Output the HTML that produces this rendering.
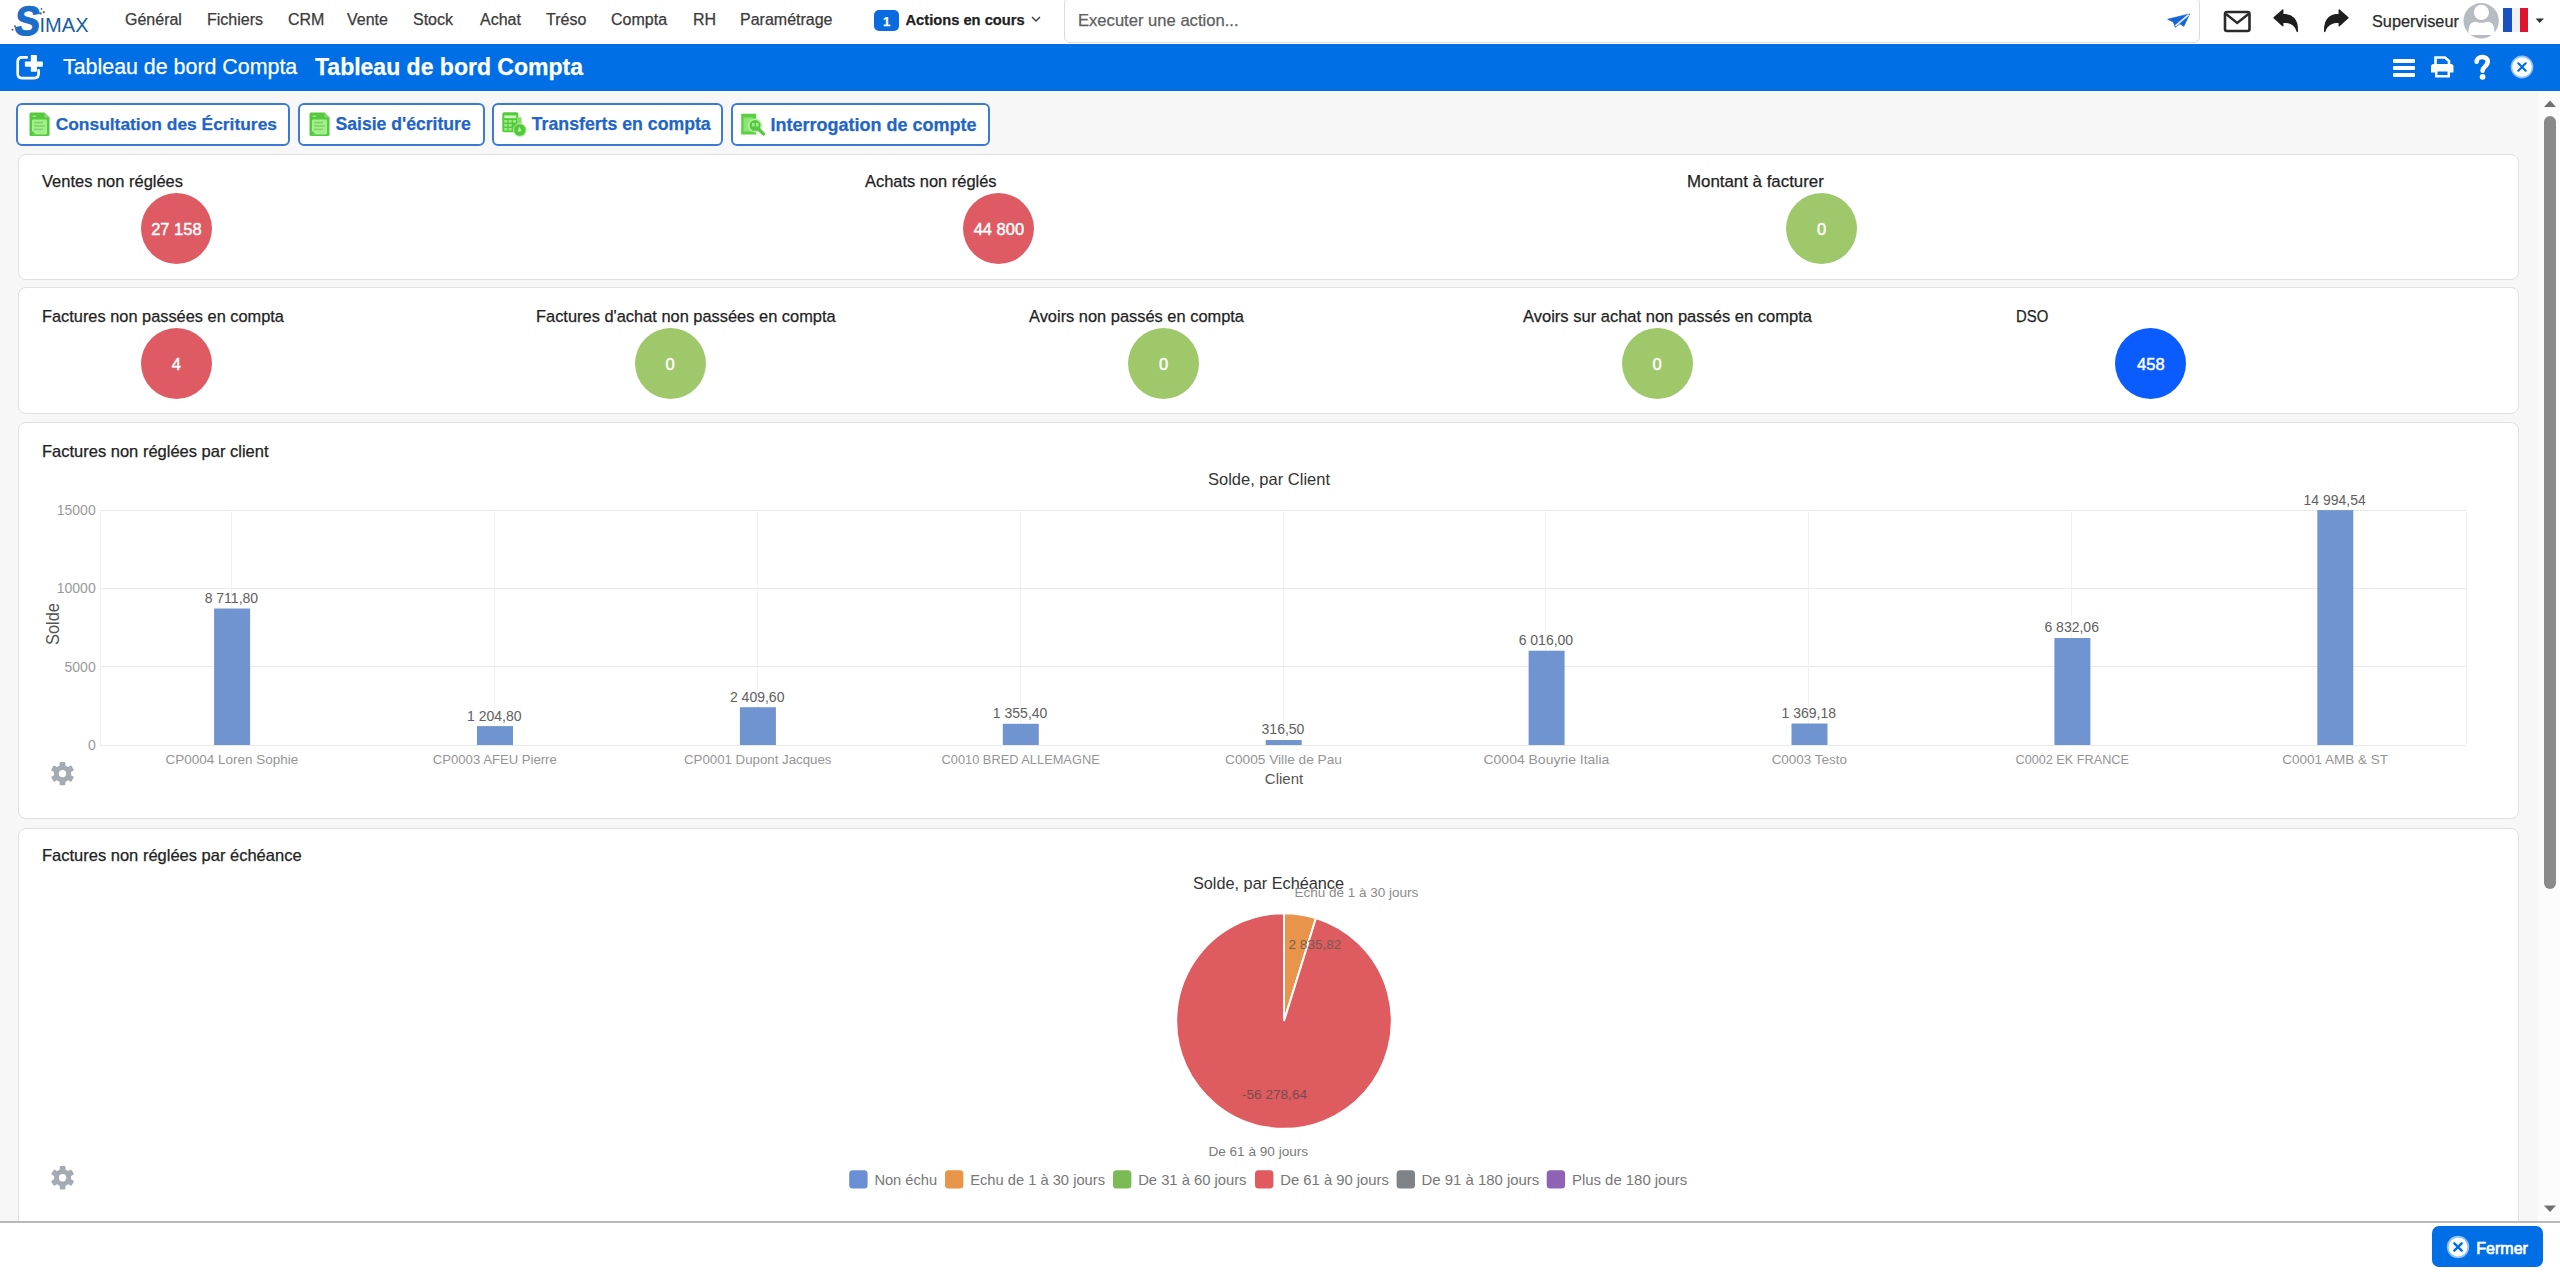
<!DOCTYPE html>
<html><head><meta charset="utf-8"><title>Tableau de bord Compta</title>
<style>
html,body{margin:0;padding:0;width:2560px;height:1280px;overflow:hidden;background:#fff;font-family:"Liberation Sans",sans-serif;}
.t{position:absolute;white-space:nowrap;line-height:1;font-family:"Liberation Sans",sans-serif;-webkit-text-stroke:0.25px currentColor;}
</style></head><body>
<div style="position:absolute;left:0px;top:0px;width:2560px;height:44px;background:#fff"></div>
<div class="t" style="left:125.0px;top:11.95px;font-size:16px;color:#3b3b3b;font-weight:400;">Général</div>
<div class="t" style="left:207.0px;top:11.95px;font-size:16px;color:#3b3b3b;font-weight:400;">Fichiers</div>
<div class="t" style="left:288.0px;top:11.95px;font-size:16px;color:#3b3b3b;font-weight:400;">CRM</div>
<div class="t" style="left:347.0px;top:11.95px;font-size:16px;color:#3b3b3b;font-weight:400;">Vente</div>
<div class="t" style="left:413.0px;top:11.95px;font-size:16px;color:#3b3b3b;font-weight:400;">Stock</div>
<div class="t" style="left:480.0px;top:11.95px;font-size:16px;color:#3b3b3b;font-weight:400;">Achat</div>
<div class="t" style="left:546.0px;top:11.95px;font-size:16px;color:#3b3b3b;font-weight:400;">Tréso</div>
<div class="t" style="left:611.0px;top:11.95px;font-size:16px;color:#3b3b3b;font-weight:400;">Compta</div>
<div class="t" style="left:693.0px;top:11.95px;font-size:16px;color:#3b3b3b;font-weight:400;">RH</div>
<div class="t" style="left:740.0px;top:11.95px;font-size:16px;color:#3b3b3b;font-weight:400;">Paramétrage</div>
<div style="position:absolute;left:874px;top:10px;width:25px;height:21px;background:#0a6ae0;border-radius:5px"></div>
<div class="t" style="left:286.5px;width:1200px;text-align:center;top:14.99px;font-size:13px;color:#fff;font-weight:700;">1</div>
<div class="t" style="left:905.5px;top:13.05px;font-size:14.7px;color:#222;font-weight:700;">Actions en cours</div>
<svg style="position:absolute;left:1030px;top:15px" width="12" height="9"><path d="M2 2 L6 6 L10 2" stroke="#444" stroke-width="1.5" fill="none"/></svg>
<div style="position:absolute;left:1064px;top:-3px;width:1136px;height:46px;box-sizing:border-box;border:1px solid #dcdcdc;border-radius:6px;background:#fff"></div>
<div class="t" style="left:1078.0px;top:13.44px;font-size:16.6px;color:#5e5e5e;font-weight:400;">Executer une action...</div>
<svg style="position:absolute;left:2160px;top:6px" width="36" height="28" viewBox="0 0 36 28"><path d="M7.7 13.3 L29.6 7.9 L23.8 20.3 L19.8 17.8 L15.3 21.2 L13.3 15.9 Z" fill="#1565d8" stroke="#1565d8" stroke-width="0.8" stroke-linejoin="round"/><path d="M15.4 19.8 L28.8 8.6" stroke="#e8f4ff" stroke-width="1.7"/></svg>
<svg style="position:absolute;left:2223px;top:10px" width="29" height="23" viewBox="0 0 29 23"><rect x="2" y="2" width="24.5" height="19" rx="2" fill="none" stroke="#2a2a2a" stroke-width="2.6"/><path d="M3 4 L14.2 13 L25.5 4" fill="none" stroke="#2a2a2a" stroke-width="2.4"/></svg>
<svg style="position:absolute;left:2272px;top:8px" width="30" height="26" viewBox="0 0 30 26"><path d="M2 9.8 L10.8 2 L10.8 6.5 C19.5 6.5 26 10.5 25.3 23.5 C23.5 17 19 14 10.8 14 L10.8 17.8 Z" fill="#1e1e1e" stroke="#1e1e1e" stroke-width="1.3" stroke-linejoin="round"/></svg>
<svg style="position:absolute;left:2320px;top:8px" width="30" height="26" viewBox="0 0 30 26"><path d="M28 9.8 L19.2 2 L19.2 6.5 C10.5 6.5 4 10.5 4.7 23.5 C6.5 17 11 14 19.2 14 L19.2 17.8 Z" fill="#1e1e1e" stroke="#1e1e1e" stroke-width="1.3" stroke-linejoin="round"/></svg>
<div class="t" style="left:2372.0px;top:12.50px;font-size:16.3px;color:#2b2b2b;font-weight:400;">Superviseur</div>
<svg style="position:absolute;left:2463px;top:2px" width="37" height="38" viewBox="0 0 37 38"><circle cx="18.2" cy="18.8" r="17.7" fill="#b7bcc2"/><circle cx="18.4" cy="10.3" r="7.6" fill="#fff"/><path d="M5.5 30 C5.5 22 9 19.8 13 19.8 C15 21.2 21.5 21.2 23.8 19.8 C28 19.8 31.5 22 31.5 30 C31.5 33 29 33 26 33 L11 33 C8 33 5.5 33 5.5 30 Z" fill="#fff"/></svg>
<div style="position:absolute;left:2503px;top:8px;width:8.5px;height:24px;background:#1b4fc4"></div>
<div style="position:absolute;left:2511.5px;top:8px;width:8.5px;height:24px;background:#eef0f4"></div>
<div style="position:absolute;left:2520px;top:8px;width:8px;height:24px;background:#e0142c"></div>
<svg style="position:absolute;left:2535px;top:18px" width="10" height="6"><path d="M0.5 0.5 L9 0.5 L4.75 5 Z" fill="#333"/></svg>
<div style="position:absolute;left:0px;top:44px;width:2560px;height:47px;background:#006ee5"></div>
<svg style="position:absolute;left:10px;top:50px" width="40" height="35" viewBox="0 0 40 35"><path d="M16.7 7.4 L12 7.4 Q7.7 7.4 7.7 11.7 L7.7 23.8 Q7.7 28.1 12 28.1 L24.3 28.1 Q28.6 28.1 28.6 23.8 L28.6 20.4" fill="none" stroke="#fff" stroke-width="2.7" stroke-linecap="round"/><rect x="14.9" y="11.4" width="17.9" height="5.3" rx="0.8" fill="#fff"/><rect x="20.8" y="5" width="6.1" height="16.7" rx="0.8" fill="#fff"/></svg>
<div class="t" style="left:63.0px;top:56.88px;font-size:21.4px;color:#fff;font-weight:400;">Tableau de bord Compta</div>
<div class="t" style="left:315.0px;top:55.53px;font-size:23px;color:#fff;font-weight:700;">Tableau de bord Compta</div>
<div style="position:absolute;left:2393px;top:58.5px;width:22px;height:4px;background:#fff;border-radius:1px"></div>
<div style="position:absolute;left:2393px;top:65.5px;width:22px;height:4px;background:#fff;border-radius:1px"></div>
<div style="position:absolute;left:2393px;top:72.5px;width:22px;height:4px;background:#fff;border-radius:1px"></div>
<svg style="position:absolute;left:2430px;top:56px" width="25" height="23" viewBox="0 0 25 23"><path d="M5.5 8 L5.5 1.5 L15 1.5 L19 5 L19 8" fill="none" stroke="#fff" stroke-width="2.6"/><path d="M1 10.5 Q1 8 3.5 8 L21 8 Q23.5 8 23.5 10.5 L23.5 16.5 L20 16.5 L20 21.5 L5 21.5 L5 16.5 L1 16.5 Z" fill="#fff"/><rect x="7.5" y="15.5" width="10" height="3.5" fill="#006ee5"/></svg>
<svg style="position:absolute;left:2473px;top:54px" width="18" height="27" viewBox="0 0 18 27"><path d="M3.6 7.8 C3.6 1.6 14.8 1.2 14.8 7.8 C14.8 12.2 9.6 12.6 9.6 16.8" fill="none" stroke="#fff" stroke-width="4.6" stroke-linecap="round"/><circle cx="9.6" cy="22.8" r="2.9" fill="#fff"/></svg>
<svg style="position:absolute;left:2510px;top:55px" width="24" height="24" viewBox="0 0 24 24"><circle cx="12" cy="12" r="10.6" fill="#fff" stroke="#8fc0ff" stroke-width="1.6"/><path d="M8.3 8.3 L15.7 15.7 M15.7 8.3 L8.3 15.7" stroke="#006ee5" stroke-width="2.2" stroke-linecap="round"/></svg>
<div style="position:absolute;left:0px;top:91px;width:2560px;height:1130px;background:#f7f7f7"></div>
<div style="position:absolute;left:16px;top:103px;width:274px;height:43px;box-sizing:border-box;border:2px solid #3d7ad6;border-radius:6px;background:#fff"></div>
<div class="t" style="left:55.7px;top:116.27px;font-size:17.4px;color:#1f65c6;font-weight:700;">Consultation des Écritures</div>
<div style="position:absolute;left:298px;top:103px;width:187px;height:43px;box-sizing:border-box;border:2px solid #3d7ad6;border-radius:6px;background:#fff"></div>
<div class="t" style="left:335.5px;top:116.10px;font-size:17.6px;color:#1f65c6;font-weight:700;">Saisie d'écriture</div>
<div style="position:absolute;left:492px;top:103px;width:231px;height:43px;box-sizing:border-box;border:2px solid #3d7ad6;border-radius:6px;background:#fff"></div>
<div class="t" style="left:531.8px;top:116.01px;font-size:17.7px;color:#1f65c6;font-weight:700;">Transferts en compta</div>
<div style="position:absolute;left:731px;top:103px;width:259px;height:43px;box-sizing:border-box;border:2px solid #3d7ad6;border-radius:6px;background:#fff"></div>
<div class="t" style="left:770.5px;top:115.76px;font-size:18px;color:#1f65c6;font-weight:700;">Interrogation de compte</div>
<svg style="position:absolute;left:28.5px;top:112px" width="21" height="25" viewBox="0 0 21 25"><path d="M2 0.5 L15.5 0.5 L20.5 5.5 L20.5 22.5 Q20.5 24 19 24 L2 24 Q0.5 24 0.5 22.5 L0.5 2 Q0.5 0.5 2 0.5 Z" fill="#55c93e"/><path d="M15.5 0.5 L20.5 5.5 L15.5 5.5 Z" fill="#8fcf80"/><rect x="3" y="7.5" width="15" height="15" rx="1" fill="#a4ef8c"/><g fill="#7ed467"><rect x="5" y="9.8" width="9" height="1.6"/><rect x="5" y="13.2" width="11" height="1.6"/><rect x="5" y="16.6" width="9" height="1.6"/></g><rect x="3.5" y="3.5" width="3.5" height="1.4" fill="#98f07e"/><path d="M3 19 L7 22.5 L3 22.5 Z" fill="#55c93e"/></svg>
<svg style="position:absolute;left:309px;top:112px" width="21" height="25" viewBox="0 0 21 25"><path d="M2 0.5 L15.5 0.5 L20.5 5.5 L20.5 22.5 Q20.5 24 19 24 L2 24 Q0.5 24 0.5 22.5 L0.5 2 Q0.5 0.5 2 0.5 Z" fill="#55c93e"/><path d="M15.5 0.5 L20.5 5.5 L15.5 5.5 Z" fill="#8fcf80"/><rect x="3" y="7.5" width="15" height="15" rx="1" fill="#a4ef8c"/><g fill="#7ed467"><rect x="5" y="9.8" width="9" height="1.6"/><rect x="5" y="13.2" width="11" height="1.6"/><rect x="5" y="16.6" width="9" height="1.6"/></g><rect x="3.5" y="3.5" width="3.5" height="1.4" fill="#98f07e"/><path d="M3 19 L7 22.5 L3 22.5 Z" fill="#55c93e"/></svg>
<svg style="position:absolute;left:498px;top:108px" width="32" height="32" viewBox="0 0 32 32"><rect x="4.3" y="4.3" width="16" height="20" rx="1.8" fill="#55c93e"/><rect x="6.3" y="7.4" width="12" height="2.8" fill="#c8f7b6"/><g fill="#98ee80"><rect x="6.3" y="12" width="3" height="2.6"/><rect x="10.6" y="12" width="3" height="2.6"/><rect x="14.9" y="12" width="3" height="2.6"/><rect x="6.3" y="16" width="3" height="2.6"/><rect x="10.6" y="16" width="3" height="2.6"/><rect x="6.3" y="20" width="3" height="2.6"/><rect x="10.6" y="20" width="3" height="2.6"/></g><rect x="19" y="9.3" width="4.6" height="6.5" fill="#86dc70"/><circle cx="21.8" cy="22" r="6.3" fill="#52c83a" stroke="#b8f3a4" stroke-width="0.9"/><path d="M21.5 18.5 L19.5 23.5 L23.5 23.5 Z" fill="#b2f79a"/></svg>
<svg style="position:absolute;left:737px;top:108px" width="32" height="32" viewBox="0 0 32 32"><rect x="4.2" y="5.7" width="15" height="20.8" fill="#5ccf44"/><rect x="6.5" y="9.5" width="9" height="14" fill="#8ce676"/><circle cx="18" cy="17.5" r="6.3" fill="#58c846" stroke="#b6f5a0" stroke-width="1.6"/><rect x="15.2" y="15" width="2.4" height="3.5" fill="#a2f48a"/><rect x="19" y="15" width="2.4" height="3.5" fill="#a2f48a"/><path d="M22 21.5 L26.6 26" stroke="#5ec444" stroke-width="3.2" stroke-linecap="round"/></svg>
<div style="position:absolute;left:18px;top:154px;width:2501px;height:126px;box-sizing:border-box;border:1px solid #e0e0e2;border-radius:8px;background:#fff"></div>
<div style="position:absolute;left:18px;top:287px;width:2501px;height:127px;box-sizing:border-box;border:1px solid #e0e0e2;border-radius:8px;background:#fff"></div>
<div style="position:absolute;left:18px;top:422px;width:2501px;height:397px;box-sizing:border-box;border:1px solid #e0e0e2;border-radius:8px;background:#fff"></div>
<div style="position:absolute;left:18px;top:828px;width:2501px;height:400px;box-sizing:border-box;border:1px solid #e0e0e2;border-radius:8px 8px 0 0;background:#fff"></div>
<div class="t" style="left:42.0px;top:172.80px;font-size:16.3px;color:#1f1f1f;font-weight:400;transform:scaleX(1.0115);transform-origin:0 0;">Ventes non réglées</div>
<div style="position:absolute;left:140.9px;top:192.8px;width:71px;height:71px;background:#de5b63;border-radius:50%"></div>
<div class="t" style="left:-423.6px;width:1200px;text-align:center;top:221.33px;font-size:16.5px;color:#fff;font-weight:400;-webkit-text-stroke:0.45px #fff;">27 158</div>
<div class="t" style="left:864.5px;top:172.80px;font-size:16.3px;color:#1f1f1f;font-weight:400;transform:scaleX(1.0092);transform-origin:0 0;">Achats non réglés</div>
<div style="position:absolute;left:963.4px;top:192.8px;width:71px;height:71px;background:#de5b63;border-radius:50%"></div>
<div class="t" style="left:398.9px;width:1200px;text-align:center;top:221.33px;font-size:16.5px;color:#fff;font-weight:400;-webkit-text-stroke:0.45px #fff;">44 800</div>
<div class="t" style="left:1687.0px;top:172.80px;font-size:16.3px;color:#1f1f1f;font-weight:400;transform:scaleX(1.0356);transform-origin:0 0;">Montant à facturer</div>
<div style="position:absolute;left:1786.0px;top:192.8px;width:71px;height:71px;background:#9fc86b;border-radius:50%"></div>
<div class="t" style="left:1221.5px;width:1200px;text-align:center;top:221.33px;font-size:16.5px;color:#fff;font-weight:400;-webkit-text-stroke:0.45px #fff;">0</div>
<div class="t" style="left:42.0px;top:307.80px;font-size:16.3px;color:#1f1f1f;font-weight:400;transform:scaleX(1.0050);transform-origin:0 0;">Factures non passées en compta</div>
<div style="position:absolute;left:140.9px;top:327.5px;width:71px;height:71px;background:#de5b63;border-radius:50%"></div>
<div class="t" style="left:-423.6px;width:1200px;text-align:center;top:356.03px;font-size:16.5px;color:#fff;font-weight:400;-webkit-text-stroke:0.45px #fff;">4</div>
<div class="t" style="left:535.6px;top:307.80px;font-size:16.3px;color:#1f1f1f;font-weight:400;transform:scaleX(1.0081);transform-origin:0 0;">Factures d'achat non passées en compta</div>
<div style="position:absolute;left:634.5px;top:327.5px;width:71px;height:71px;background:#9fc86b;border-radius:50%"></div>
<div class="t" style="left:70.0px;width:1200px;text-align:center;top:356.03px;font-size:16.5px;color:#fff;font-weight:400;-webkit-text-stroke:0.45px #fff;">0</div>
<div class="t" style="left:1029.2px;top:307.80px;font-size:16.3px;color:#1f1f1f;font-weight:400;transform:scaleX(1.0080);transform-origin:0 0;">Avoirs non passés en compta</div>
<div style="position:absolute;left:1128.1000000000001px;top:327.5px;width:71px;height:71px;background:#9fc86b;border-radius:50%"></div>
<div class="t" style="left:563.6px;width:1200px;text-align:center;top:356.03px;font-size:16.5px;color:#fff;font-weight:400;-webkit-text-stroke:0.45px #fff;">0</div>
<div class="t" style="left:1522.8px;top:307.80px;font-size:16.3px;color:#1f1f1f;font-weight:400;transform:scaleX(1.0147);transform-origin:0 0;">Avoirs sur achat non passés en compta</div>
<div style="position:absolute;left:1621.7000000000003px;top:327.5px;width:71px;height:71px;background:#9fc86b;border-radius:50%"></div>
<div class="t" style="left:1057.2px;width:1200px;text-align:center;top:356.03px;font-size:16.5px;color:#fff;font-weight:400;-webkit-text-stroke:0.45px #fff;">0</div>
<div class="t" style="left:2016.4px;top:307.80px;font-size:16.3px;color:#1f1f1f;font-weight:400;transform:scaleX(0.9150);transform-origin:0 0;">DSO</div>
<div style="position:absolute;left:2115.3px;top:327.5px;width:71px;height:71px;background:#0b5cff;border-radius:50%"></div>
<div class="t" style="left:1550.8px;width:1200px;text-align:center;top:356.03px;font-size:16.5px;color:#fff;font-weight:400;-webkit-text-stroke:0.45px #fff;">458</div>
<div class="t" style="left:42.0px;top:443.03px;font-size:16.5px;color:#222;font-weight:400;">Factures non réglées par client</div>
<div class="t" style="left:42.0px;top:846.63px;font-size:16.5px;color:#222;font-weight:400;">Factures non réglées par échéance</div>
<svg style="position:absolute;left:0;top:0" width="2560" height="1280">
<g stroke="#e9e9e9" stroke-width="1" shape-rendering="crispEdges">
<line x1="100" y1="745.0" x2="2466" y2="745.0"/>
<line x1="100" y1="666.7" x2="2466" y2="666.7"/>
<line x1="100" y1="588.3" x2="2466" y2="588.3"/>
<line x1="100" y1="510.0" x2="2466" y2="510.0"/>
</g><g stroke="#f1f1f1" stroke-width="1" shape-rendering="crispEdges">
<line x1="231.4" y1="510" x2="231.4" y2="745"/>
<line x1="494.3" y1="510" x2="494.3" y2="745"/>
<line x1="757.2" y1="510" x2="757.2" y2="745"/>
<line x1="1020.1" y1="510" x2="1020.1" y2="745"/>
<line x1="1283.0" y1="510" x2="1283.0" y2="745"/>
<line x1="1545.9" y1="510" x2="1545.9" y2="745"/>
<line x1="1808.8" y1="510" x2="1808.8" y2="745"/>
<line x1="2071.7" y1="510" x2="2071.7" y2="745"/>
<line x1="2334.6" y1="510" x2="2334.6" y2="745"/>
<line x1="100" y1="510" x2="100" y2="745"/><line x1="2466" y1="510" x2="2466" y2="745"/>
</g>
<rect x="214.1" y="608.5" width="36" height="136.5" fill="#7094cf"/>
<text x="231.4" y="602.9" text-anchor="middle" font-family="Liberation Sans, sans-serif" font-size="14" fill="#606060">8 711,80</text>
<text x="231.9" y="763.7" text-anchor="middle" font-family="Liberation Sans, sans-serif" font-size="13.4" fill="#959595" textLength="133.0" lengthAdjust="spacingAndGlyphs">CP0004 Loren Sophie</text>
<rect x="477.0" y="726.1" width="36" height="18.9" fill="#7094cf"/>
<text x="494.3" y="720.5" text-anchor="middle" font-family="Liberation Sans, sans-serif" font-size="14" fill="#606060">1 204,80</text>
<text x="494.8" y="763.7" text-anchor="middle" font-family="Liberation Sans, sans-serif" font-size="13.4" fill="#959595" textLength="124.0" lengthAdjust="spacingAndGlyphs">CP0003 AFEU Pierre</text>
<rect x="739.9" y="707.2" width="36" height="37.8" fill="#7094cf"/>
<text x="757.2" y="701.6" text-anchor="middle" font-family="Liberation Sans, sans-serif" font-size="14" fill="#606060">2 409,60</text>
<text x="757.7" y="763.7" text-anchor="middle" font-family="Liberation Sans, sans-serif" font-size="13.4" fill="#959595" textLength="147.4" lengthAdjust="spacingAndGlyphs">CP0001 Dupont Jacques</text>
<rect x="1002.8" y="723.8" width="36" height="21.2" fill="#7094cf"/>
<text x="1020.1" y="718.2" text-anchor="middle" font-family="Liberation Sans, sans-serif" font-size="14" fill="#606060">1 355,40</text>
<text x="1020.6" y="763.7" text-anchor="middle" font-family="Liberation Sans, sans-serif" font-size="13.4" fill="#959595" textLength="158.2" lengthAdjust="spacingAndGlyphs">C0010 BRED ALLEMAGNE</text>
<rect x="1265.7" y="740.0" width="36" height="5.0" fill="#7094cf"/>
<text x="1283.0" y="734.4" text-anchor="middle" font-family="Liberation Sans, sans-serif" font-size="14" fill="#606060">316,50</text>
<text x="1283.5" y="763.7" text-anchor="middle" font-family="Liberation Sans, sans-serif" font-size="13.4" fill="#959595" textLength="116.9" lengthAdjust="spacingAndGlyphs">C0005 Ville de Pau</text>
<rect x="1528.6" y="650.7" width="36" height="94.3" fill="#7094cf"/>
<text x="1545.9" y="645.1" text-anchor="middle" font-family="Liberation Sans, sans-serif" font-size="14" fill="#606060">6 016,00</text>
<text x="1546.4" y="763.7" text-anchor="middle" font-family="Liberation Sans, sans-serif" font-size="13.4" fill="#959595" textLength="125.8" lengthAdjust="spacingAndGlyphs">C0004 Bouyrie Italia</text>
<rect x="1791.5" y="723.5" width="36" height="21.5" fill="#7094cf"/>
<text x="1808.8" y="717.9" text-anchor="middle" font-family="Liberation Sans, sans-serif" font-size="14" fill="#606060">1 369,18</text>
<text x="1809.3" y="763.7" text-anchor="middle" font-family="Liberation Sans, sans-serif" font-size="13.4" fill="#959595" textLength="75.3" lengthAdjust="spacingAndGlyphs">C0003 Testo</text>
<rect x="2054.4" y="638.0" width="36" height="107.0" fill="#7094cf"/>
<text x="2071.7" y="632.4" text-anchor="middle" font-family="Liberation Sans, sans-serif" font-size="14" fill="#606060">6 832,06</text>
<text x="2072.2" y="763.7" text-anchor="middle" font-family="Liberation Sans, sans-serif" font-size="13.4" fill="#959595" textLength="113.4" lengthAdjust="spacingAndGlyphs">C0002 EK FRANCE</text>
<rect x="2317.3" y="510.1" width="36" height="234.9" fill="#7094cf"/>
<text x="2334.6" y="504.5" text-anchor="middle" font-family="Liberation Sans, sans-serif" font-size="14" fill="#606060">14 994,54</text>
<text x="2335.1" y="763.7" text-anchor="middle" font-family="Liberation Sans, sans-serif" font-size="13.4" fill="#959595" textLength="105.9" lengthAdjust="spacingAndGlyphs">C0001 AMB &amp; ST</text>
<text x="95.7" y="750.0" text-anchor="end" font-family="Liberation Sans, sans-serif" font-size="14" fill="#9a9a9a">0</text>
<text x="95.7" y="671.7" text-anchor="end" font-family="Liberation Sans, sans-serif" font-size="14" fill="#9a9a9a">5000</text>
<text x="95.7" y="593.3" text-anchor="end" font-family="Liberation Sans, sans-serif" font-size="14" fill="#9a9a9a">10000</text>
<text x="95.7" y="515.0" text-anchor="end" font-family="Liberation Sans, sans-serif" font-size="14" fill="#9a9a9a">15000</text>
<text transform="translate(59,624) rotate(-90)" text-anchor="middle" font-family="Liberation Sans, sans-serif" font-size="17.5" fill="#555" textLength="42" lengthAdjust="spacingAndGlyphs">Solde</text>
<text x="1284" y="783.6" text-anchor="middle" font-family="Liberation Sans, sans-serif" font-size="15" fill="#555">Client</text>
<text x="1269" y="484.8" text-anchor="middle" font-family="Liberation Sans, sans-serif" font-size="16.5" fill="#333">Solde, par Client</text>
<g transform="translate(62.5,773.6)" fill="#a5abb3"><circle r="8.6"/><rect x="-2.9" y="-11.7" width="5.8" height="6" rx="1" transform="rotate(0)"/><rect x="-2.9" y="-11.7" width="5.8" height="6" rx="1" transform="rotate(60)"/><rect x="-2.9" y="-11.7" width="5.8" height="6" rx="1" transform="rotate(120)"/><rect x="-2.9" y="-11.7" width="5.8" height="6" rx="1" transform="rotate(180)"/><rect x="-2.9" y="-11.7" width="5.8" height="6" rx="1" transform="rotate(240)"/><rect x="-2.9" y="-11.7" width="5.8" height="6" rx="1" transform="rotate(300)"/><circle r="3.7" fill="#fff"/></g>
<g transform="translate(62.6,1177.7)" fill="#a5abb3"><circle r="8.6"/><rect x="-2.9" y="-11.7" width="5.8" height="6" rx="1" transform="rotate(0)"/><rect x="-2.9" y="-11.7" width="5.8" height="6" rx="1" transform="rotate(60)"/><rect x="-2.9" y="-11.7" width="5.8" height="6" rx="1" transform="rotate(120)"/><rect x="-2.9" y="-11.7" width="5.8" height="6" rx="1" transform="rotate(180)"/><rect x="-2.9" y="-11.7" width="5.8" height="6" rx="1" transform="rotate(240)"/><rect x="-2.9" y="-11.7" width="5.8" height="6" rx="1" transform="rotate(300)"/><circle r="3.7" fill="#fff"/></g>
<path d="M1284 1021 L1284 913.2 A107.8 107.8 0 0 1 1316.00 918.06 Z" fill="#e8944a" stroke="#fff" stroke-width="2"/>
<path d="M1284 1021 L1316.00 918.06 A107.8 107.8 0 1 1 1284 913.2 Z" fill="#de5b60" stroke="#fff" stroke-width="2"/>
<text x="1268.5" y="889.3" text-anchor="middle" font-family="Liberation Sans, sans-serif" font-size="16.3" fill="#333">Solde, par Echéance</text>
<text x="1294.5" y="896.6" font-family="Liberation Sans, sans-serif" font-size="13.5" fill="#8a8a8a">Echu de 1 à 30 jours</text>
<text x="1288.5" y="949" font-family="Liberation Sans, sans-serif" font-size="13.6" fill="#6b5b50" opacity="0.9">2 835,82</text>
<text x="1242" y="1099.2" font-family="Liberation Sans, sans-serif" font-size="13.6" fill="#6b4a4c" opacity="0.9">-56 278,64</text>
<text x="1208.4" y="1155.5" font-family="Liberation Sans, sans-serif" font-size="13.6" fill="#7a7a7a">De 61 à 90 jours</text>
<rect x="849.2" y="1170.2" width="18.4" height="18.4" rx="3.5" fill="#6b8fd5"/>
<text x="874.4" y="1185" font-family="Liberation Sans, sans-serif" font-size="14.6" fill="#777" textLength="62.7" lengthAdjust="spacingAndGlyphs">Non échu</text>
<rect x="945" y="1170.2" width="18.4" height="18.4" rx="3.5" fill="#e8954a"/>
<text x="970.2" y="1185" font-family="Liberation Sans, sans-serif" font-size="14.6" fill="#777" textLength="134.8" lengthAdjust="spacingAndGlyphs">Echu de 1 à 30 jours</text>
<rect x="1113" y="1170.2" width="18.4" height="18.4" rx="3.5" fill="#7bbb56"/>
<text x="1138.2" y="1185" font-family="Liberation Sans, sans-serif" font-size="14.6" fill="#777" textLength="108.3" lengthAdjust="spacingAndGlyphs">De 31 à 60 jours</text>
<rect x="1255" y="1170.2" width="18.4" height="18.4" rx="3.5" fill="#e05a5e"/>
<text x="1280.3" y="1185" font-family="Liberation Sans, sans-serif" font-size="14.6" fill="#777" textLength="108.6" lengthAdjust="spacingAndGlyphs">De 61 à 90 jours</text>
<rect x="1396.6" y="1170.2" width="18.4" height="18.4" rx="3.5" fill="#7f8386"/>
<text x="1421.6" y="1185" font-family="Liberation Sans, sans-serif" font-size="14.6" fill="#777" textLength="117.7" lengthAdjust="spacingAndGlyphs">De 91 à 180 jours</text>
<rect x="1546.7" y="1170.2" width="18.4" height="18.4" rx="3.5" fill="#9062b4"/>
<text x="1572" y="1185" font-family="Liberation Sans, sans-serif" font-size="14.6" fill="#777" textLength="115.1" lengthAdjust="spacingAndGlyphs">Plus de 180 jours</text>
</svg>
<div style="position:absolute;left:0px;top:1221px;width:2560px;height:59px;background:#fff"></div>
<div style="position:absolute;left:0px;top:1221px;width:2560px;height:2px;background:#b9b9b9"></div>
<div style="position:absolute;left:2431.5px;top:1225.5px;width:111px;height:41.5px;background:#006ee5;border-radius:7px"></div>
<svg style="position:absolute;left:2446px;top:1235px" width="24" height="24" viewBox="0 0 24 24"><circle cx="12" cy="12" r="10.3" fill="#fff" stroke="#8fc0ff" stroke-width="1.8"/><path d="M8.3 8.3 L15.7 15.7 M15.7 8.3 L8.3 15.7" stroke="#006ee5" stroke-width="2.4" stroke-linecap="round"/></svg>
<div class="t" style="left:2476.3px;top:1240.75px;font-size:16px;color:#fff;font-weight:400;-webkit-text-stroke:0.7px #fff;">Fermer</div>
<div style="position:absolute;left:2538px;top:91px;width:22px;height:1130px;background:#fcfcfc"></div>
<div style="position:absolute;left:2544px;top:116px;width:12px;height:773px;background:#8a8a8a;border-radius:6px"></div>
<svg style="position:absolute;left:2543px;top:99px" width="14" height="10"><path d="M1 8 L7 1.5 L13 8 Z" fill="#707070"/></svg>
<svg style="position:absolute;left:2543px;top:1204px" width="14" height="10"><path d="M1 1.5 L7 8 L13 1.5 Z" fill="#707070"/></svg>
<svg style="position:absolute;left:8px;top:0px" width="90" height="42" viewBox="0 0 90 42"><text x="0" y="0" font-family="Liberation Sans, sans-serif" font-weight="700" font-size="41" fill="#1c6cc9" stroke="#1c6cc9" stroke-width="1.3" stroke-linejoin="round" transform="translate(5.5,35.2) scale(0.92,1) skewX(-7)">S</text><text x="31.5" y="32" font-family="Liberation Sans, sans-serif" font-size="20.5" fill="#1b5d9e" textLength="49" lengthAdjust="spacingAndGlyphs">IMAX</text><g fill="#5a6470"><circle cx="32.5" cy="13.4" r="1.2"/><circle cx="35.8" cy="12.2" r="1.1"/><circle cx="33.5" cy="9" r="0.9"/><circle cx="4.5" cy="29.8" r="1"/><circle cx="7" cy="26.3" r="1"/><circle cx="9.5" cy="28" r="0.9"/></g></svg>
</body></html>
